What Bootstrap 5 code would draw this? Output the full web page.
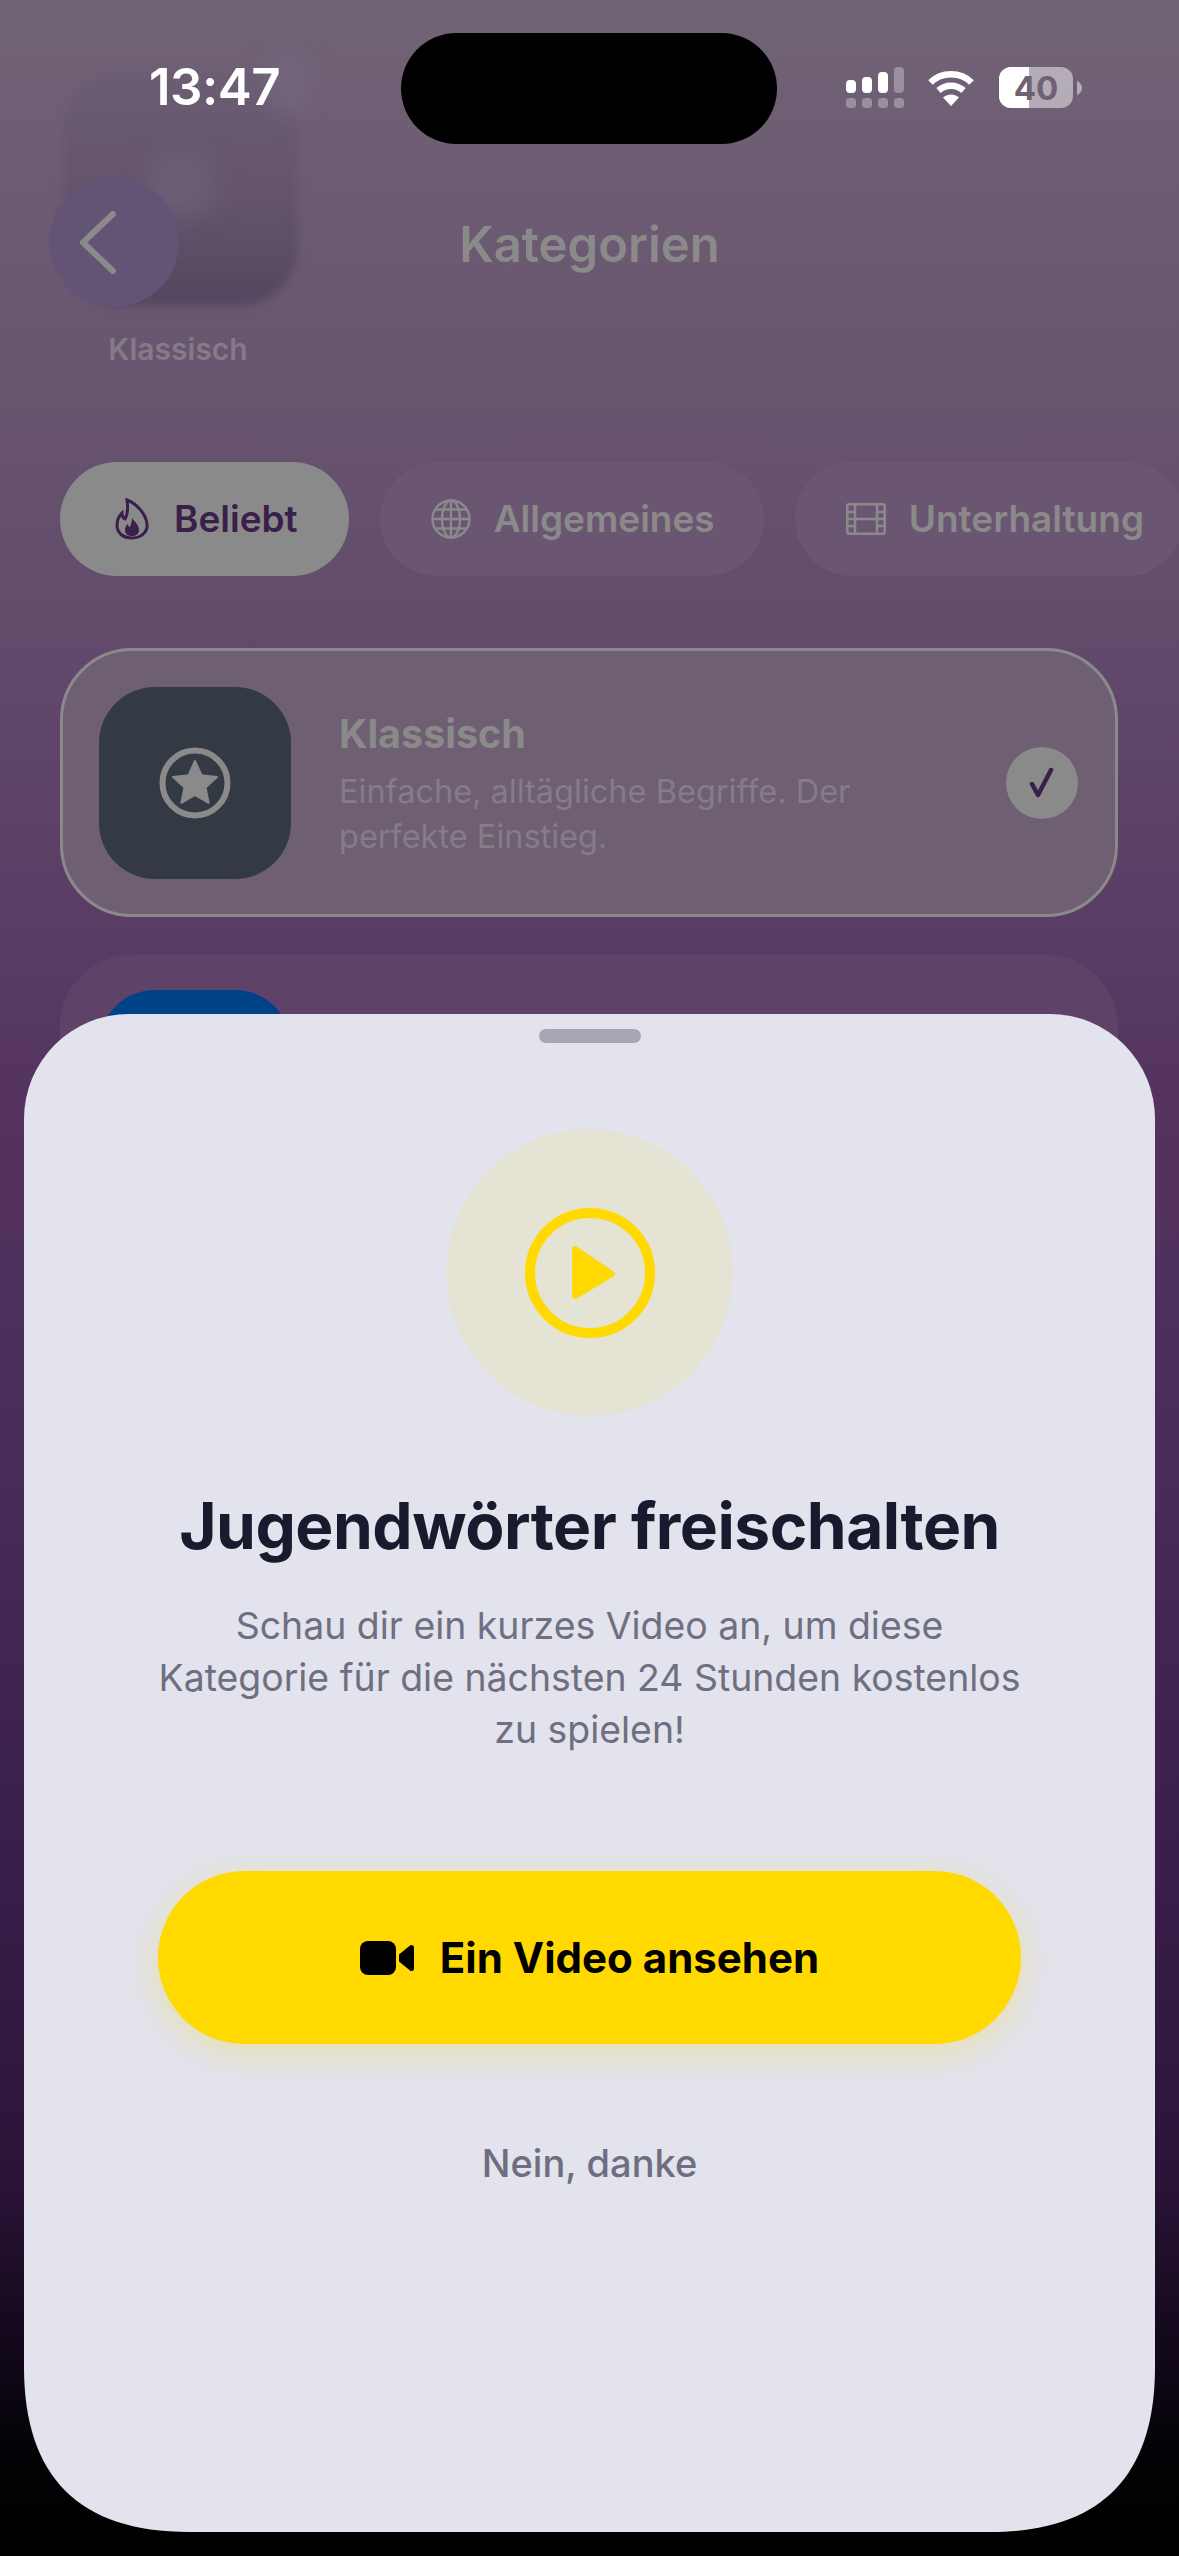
<!DOCTYPE html>
<html lang="de">
<head>
  <meta charset="UTF-8">
  <meta name="viewport" content="width=device-width, initial-scale=1">
  <title>Kategorien</title>
  <link href="https://cdn.jsdelivr.net/npm/bootstrap@5.3.2/dist/css/bootstrap.min.css" rel="stylesheet">
  <style>
    html, body { margin: 0; height: 2556px; background: #000; }
    body { font-family: Inter, "Liberation Sans", sans-serif; overflow: hidden; }
    .screen {
      width: 1179px; height: 2556px; overflow: hidden; position: relative;
      background: linear-gradient(180deg, #716376 0%, #67546f 16%, #5f4469 30%, #55355f 42%, #4a2a58 58%, #3a1f4b 72%, #2b1438 85%, #12081a 92%, #030205 96%, #000 100%);
    }
    /* status bar */
    .status-time { position: absolute; left: 149px; top: 58px; color: #fff; font-size: 51px; font-weight: 600; line-height: 58px; letter-spacing: -.5px; }
    .island { position: absolute; left: 401px; top: 33px; width: 376px; height: 111px; background: #000; border-radius: 56px; }
    .status-icons { position: absolute; left: 846px; top: 67px; }
    .battery-num { font-family: Inter, sans-serif; font-size: 33px; font-weight: 700; fill: #6f6275; }
    /* blurred ghost icon behind header */
    .ghost-icon { position: absolute; left: 63px; top: 72px; width: 235px; height: 234px; border-radius: 60px; background: linear-gradient(180deg, #6b5d73 0%, #63546c 55%, #524760 100%); filter: blur(5px); }
    .ghost-dot { position: absolute; left: 148px; top: 150px; width: 66px; height: 66px; border-radius: 50%; background: #6c5f75; filter: blur(12px); }
    .ghost-dot2 { position: absolute; left: 262px; top: 50px; width: 50px; height: 66px; border-radius: 50%; background: #72647a; filter: blur(10px); }
    .ghost-label { position: absolute; left: 58px; width: 240px; top: 332px; text-align: center; font-size: 30px; font-weight: 600; color: #837b86; line-height: 34px; }
    /* page behind the sheet */
    .page-head { padding: 177px 49px 0; height: 307px; position: relative; }
    .back-btn { width: 130px; height: 130px; border-radius: 50%; background: #635375; }
    .page-title { position: absolute; left: 0; right: 0; top: 217px; text-align: center; font-size: 49px; font-weight: 600; line-height: 56px; color: #8a8a8a; }
    .chip-row { padding: 155px 0 0 60px; gap: 31px; width: 1300px; }
    .cat-chip { height: 114px; font-size: 37px; font-weight: 600; color: #8a8a8a; background: #6a5672; gap: 23px; white-space: nowrap; }
    .chip-on { background: #8a8a8a; color: #3a1f4a; padding: 0 51px 0 55px; gap: 25px; }
    .chip-two { padding: 0 49px 0 51px; }
    .chip-three { padding: 0 40px 0 51px; }
    .cat-list { padding: 72px 61px 0 60px; gap: 38px; }
    .cat-card { height: 269px; border-radius: 72px; padding: 0 37px 0 36px; gap: 48px; background: #6f5f73; border: 3px solid #8a8a8a; }
    .cat-card2 { background: #5e4268; border-color: #5e4268; align-items: flex-start; padding-top: 32px; }
    .cat-tile { width: 192px; height: 192px; border-radius: 56px; background: #333a44; flex: none; }
    .tile-blue { background: #004288; }
    .cat-name { font-size: 39.5px; font-weight: 700; line-height: 48px; color: #8a8a8a; margin: 3px 0 11px; }
    .cat-desc { font-size: 32.5px; line-height: 45px; color: #857c88; width: 570px; }
    .cat-check { width: 72px; height: 72px; border-radius: 50%; background: #8a8a8a; flex: none; margin-left: auto; }
    /* bottom sheet: top corners round, bottom corners follow the device's continuous curve */
    .sheet {
      position: absolute; left: 24px; top: 1014px; width: 1131px; height: 1518px; background: #e2e3ec; padding-top: 15px;
      clip-path: path("M0 105A105 105 0 0 1 105 0H1026A105 105 0 0 1 1131 105V1353C1131 1463 1076 1518 966 1518H165C55 1518 0 1463 0 1353Z");
    }
    .grab { width: 102px; height: 14px; border-radius: 7px; background: #a6a7b2; }
    .play-wrap { width: 287px; height: 287px; border-radius: 50%; background: #e5e3d3; margin-top: 86px; }
    .sheet-title { font-size: 64px; font-weight: 700; line-height: 78px; color: #1a1a2e; margin: 71px 0 0; letter-spacing: -.5px; }
    .sheet-text { font-size: 37.4px; line-height: 52px; color: #6f6f82; width: 875px; margin: 35px 0 0; }
    .btn-watch { width: 863px; height: 173px; border-radius: 87px; background: #ffd900; border: 0; margin-top: 115px; gap: 26px; color: #000; font-size: 42px; font-weight: 700; box-shadow: 0 8px 34px rgba(255, 217, 0, .28); }
    .btn-watch:hover, .btn-watch:active { background: #ffd900; color: #000; }
    .btn-later { font-size: 38px; font-weight: 500; color: #6e6e80; line-height: 46px; margin-top: 96px; border: 0; padding: 0; background: none; }
  </style>
</head>
<body>
  <div class="screen">

    <!-- ghost of the dragged category icon -->
    <div class="ghost-icon"></div>
    <div class="ghost-dot"></div>
    <div class="ghost-dot2"></div>
    <div class="ghost-label">Klassisch</div>

    <div class="page-head">
      <div class="back-btn d-flex align-items-center justify-content-center position-relative">
        <svg width="38" height="63" viewBox="0 0 38 63" fill="none" stroke="#8a8a8a" stroke-width="6" stroke-linecap="round" stroke-linejoin="round" style="margin-right:32px"><path d="M34 3 4 31.500 34 60"/></svg>
      </div>
      <div class="page-title">Kategorien</div>
    </div>

    <div class="chip-row d-flex">
      <div class="cat-chip chip-on rounded-pill d-flex align-items-center">
        <svg width="34" height="42" viewBox="0 0 34 42" fill="none" stroke="#3a1f4a" stroke-width="3"><path d="M12 2c10 4 19 14 20 24 1 8-6 14-15 14S2 35 2 27c0-5 2-9 5-12 0 3 1 5 3 6 3-5 3-12 2-19z"/><path d="M17 20c2 3 7 7 7 12 0 4-3 6-7 6s-7-2-7-6c0-3 1-5 3-6 0 2 1 3 2 3 1-3 2-6 2-9z" fill="#3a1f4a" stroke="none"/></svg>
        <span>Beliebt</span>
      </div>
      <div class="cat-chip chip-two rounded-pill d-flex align-items-center">
        <svg width="40" height="40" viewBox="0 0 40 40" fill="none" stroke="#8a8a8a" stroke-width="2.4"><circle cx="20" cy="20" r="18.5"/><ellipse cx="20" cy="20" rx="9" ry="18.5"/><path d="M20 1.5v37M1.5 20h37M4 10.500h32M4 29.500h32"/></svg>
        <span>Allgemeines</span>
      </div>
      <div class="cat-chip chip-three rounded-pill d-flex align-items-center">
        <svg width="40" height="32" viewBox="0 0 40 32" fill="none" stroke="#8a8a8a" stroke-width="2.6"><rect x="1.300" y="1.300" width="37.400" height="29.400" rx="2"/><path d="M9 1.300v29.400M31 1.300v29.400M1.300 9h7.700M1.300 16h37.400M1.300 23h7.700M31 9h7.700M31 23h7.700"/></svg>
        <span>Unterhaltung</span>
      </div>
    </div>

    <div class="cat-list d-flex flex-column">
      <div class="cat-card d-flex align-items-center">
        <div class="cat-tile d-flex align-items-center justify-content-center">
          <svg width="72" height="72" viewBox="0 0 72 72"><circle cx="36" cy="36" r="32.500" fill="none" stroke="#8a8a8a" stroke-width="6"/><path d="M36 14l6.500 14.200 15.500 1.800-11.500 10.500 3.100 15.300L36 48l-13.600 7.800 3.100-15.300L14 30l15.500-1.800z" fill="#8a8a8a" stroke="#8a8a8a" stroke-width="2" stroke-linejoin="round"/></svg>
        </div>
        <div>
          <div class="cat-name">Klassisch</div>
          <div class="cat-desc">Einfache, alltägliche Begriffe. Der perfekte Einstieg.</div>
        </div>
        <div class="cat-check d-flex align-items-center justify-content-center">
          <svg width="32" height="32" viewBox="0 0 32 32" fill="none" stroke="#3a1f4a" stroke-width="4.500" stroke-linecap="round" stroke-linejoin="round"><path d="M6 17l6 11L25 3"/></svg>
        </div>
      </div>
      <div class="cat-card cat-card2 d-flex">
        <div class="cat-tile tile-blue"></div>
      </div>
    </div>

    <!-- status bar -->
    <div class="status-time">13:47</div>
    <div class="island"></div>
    <svg class="status-icons" width="240" height="42" viewBox="0 0 240 42">
      <g fill="#fff">
        <rect x="0" y="13" width="10" height="13" rx="4"/>
        <rect x="16" y="10" width="10" height="16" rx="4"/>
        <rect x="32" y="5" width="10" height="21" rx="4"/>
      </g>
      <g fill="#fff" fill-opacity=".3">
        <rect x="48" y="0" width="10" height="26" rx="4"/>
        <rect x="0" y="31" width="10" height="10" rx="3.500"/>
        <rect x="16" y="31" width="10" height="10" rx="3.500"/>
        <rect x="32" y="31" width="10" height="10" rx="3.500"/>
        <rect x="48" y="31" width="10" height="10" rx="3.500"/>
      </g>
      <g fill="none" stroke="#fff" stroke-width="6.500">
        <path d="M84.500 15.500c11-11 30-11 41 0"/>
        <path d="M92.500 23.500c7-6.500 18-6.500 25 0"/>
      </g>
      <path d="M97 30.500c5-4 11-4 16 0l-8 8.500z" fill="#fff"/>
      <rect x="153" y="0" width="74" height="41" rx="12" fill="#fff" fill-opacity=".48"/>
      <path d="M165 0h18v41h-18a12 12 0 0 1-12-12V12a12 12 0 0 1 12-12z" fill="#fff"/>
      <path d="M231 14c3 1 5 4 5 7s-2 6-5 7z" fill="#fff" fill-opacity=".48"/>
      <text x="190" y="33" text-anchor="middle" class="battery-num">40</text>
    </svg>

    <!-- bottom sheet -->
    <div class="sheet d-flex flex-column align-items-center text-center">
      <div class="grab"></div>
      <div class="play-wrap d-flex align-items-center justify-content-center">
        <svg width="130" height="130" viewBox="0 0 130 130"><circle cx="65" cy="65" r="60" fill="none" stroke="#ffd900" stroke-width="10"/><path d="M47 41v47a3 3 0 0 0 4.500 2.500l37-22a3 3 0 0 0 0-5l-37-25A3 3 0 0 0 47 41z" fill="#ffd900"/></svg>
      </div>
      <h2 class="sheet-title">Jugendwörter freischalten</h2>
      <p class="sheet-text">Schau dir ein kurzes Video an, um diese Kategorie für die nächsten 24 Stunden kostenlos zu spielen!</p>
      <button type="button" class="btn btn-watch d-flex align-items-center justify-content-center">
        <svg width="54" height="34" viewBox="0 0 54 34"><rect x="0" y="0" width="36" height="34" rx="8" fill="#000"/><path d="M39 13.500 50 4.500c1.500-1.200 4-.5 4 2v21c0 2.500-2.500 3.200-4 2l-11-9z" fill="#000"/></svg>
        <span>Ein Video ansehen</span>
      </button>
      <button type="button" class="btn btn-later">Nein, danke</button>
    </div>
  </div>

  <script src="https://cdn.jsdelivr.net/npm/bootstrap@5.3.2/dist/js/bootstrap.bundle.min.js"></script>
</body>
</html>
